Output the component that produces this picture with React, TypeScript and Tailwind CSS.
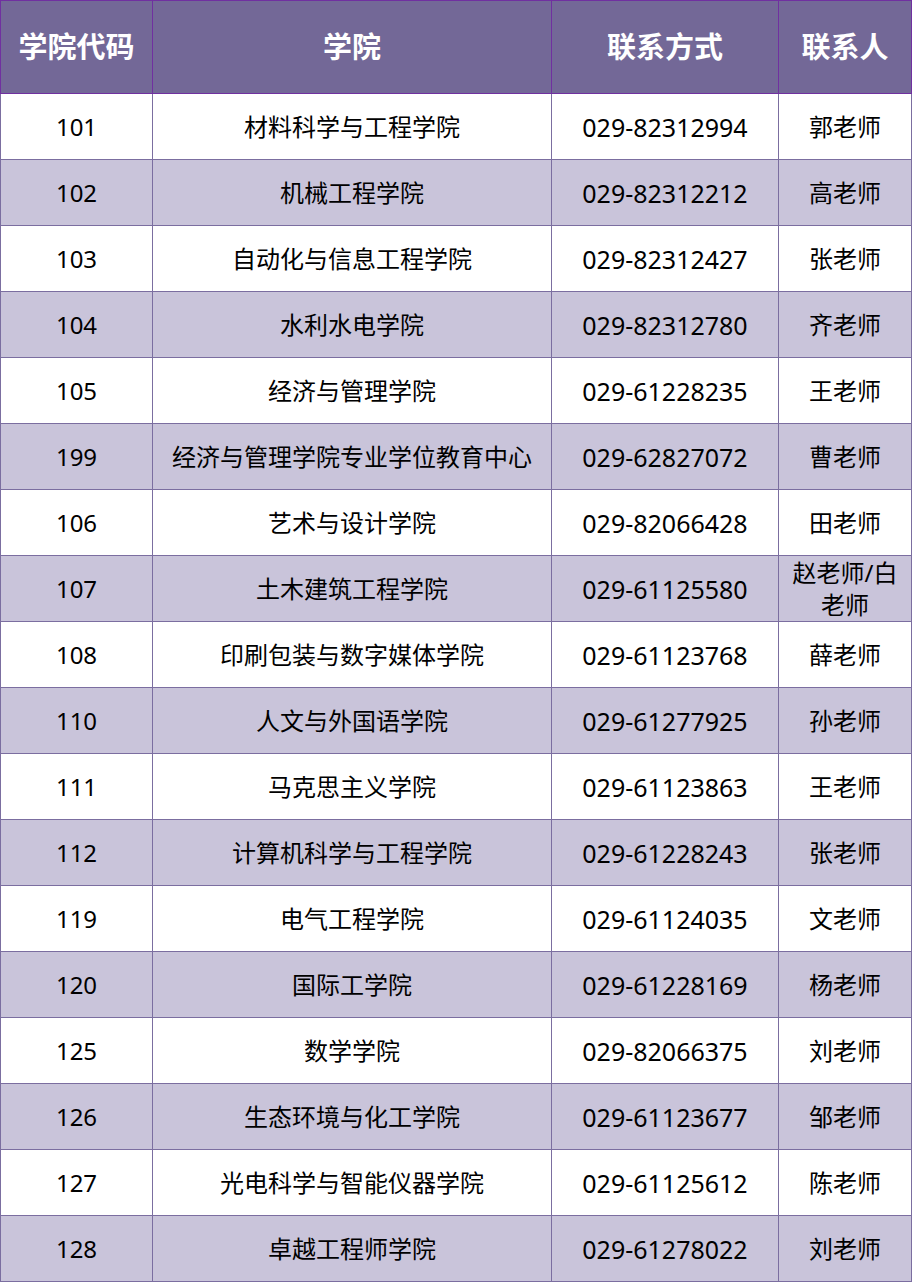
import React from "react";

const rows: [string, string, string, string][] = [
  ["101", "材料科学与工程学院", "029-82312994", "郭老师"],
  ["102", "机械工程学院", "029-82312212", "高老师"],
  ["103", "自动化与信息工程学院", "029-82312427", "张老师"],
  ["104", "水利水电学院", "029-82312780", "齐老师"],
  ["105", "经济与管理学院", "029-61228235", "王老师"],
  ["199", "经济与管理学院专业学位教育中心", "029-62827072", "曹老师"],
  ["106", "艺术与设计学院", "029-82066428", "田老师"],
  ["107", "土木建筑工程学院", "029-61125580", "赵老师/白老师"],
  ["108", "印刷包装与数字媒体学院", "029-61123768", "薛老师"],
  ["110", "人文与外国语学院", "029-61277925", "孙老师"],
  ["111", "马克思主义学院", "029-61123863", "王老师"],
  ["112", "计算机科学与工程学院", "029-61228243", "张老师"],
  ["119", "电气工程学院", "029-61124035", "文老师"],
  ["120", "国际工学院", "029-61228169", "杨老师"],
  ["125", "数学学院", "029-82066375", "刘老师"],
  ["126", "生态环境与化工学院", "029-61123677", "邹老师"],
  ["127", "光电科学与智能仪器学院", "029-61125612", "陈老师"],
  ["128", "卓越工程师学院", "029-61278022", "刘老师"],
];

const widths = ["w-[152px]", "w-[399px]", "w-[227px]", "w-[133px]"];
const headers = ["学院代码", "学院", "联系方式", "联系人"];

export default function App() {
  return (
    <div
      className="w-[912px] bg-white text-black"
      style={{ fontFamily: '"Noto Sans", "Noto Sans CJK SC", sans-serif' }}
    >
      <div className="flex border-l border-t border-[#7030a0] bg-[#736897]">
        {headers.map((h, i) => (
          <div
            key={h}
            className={`${widths[i]} h-[93px] flex items-center justify-center border-r border-b border-[#7030a0] text-white font-bold text-[29px]`}
          >
            {h}
          </div>
        ))}
      </div>
      <div className="border-l border-[#7b6ea0]">
        {rows.map((r, ri) => (
          <div
            key={ri}
            className={`flex ${ri % 2 === 1 ? "bg-[#c9c4da]" : "bg-white"}`}
          >
            {r.map((c, ci) => (
              <div
                key={ci}
                className={`${widths[ci]} h-[66px] flex items-center justify-center text-center border-r border-b border-[#7b6ea0] leading-[32px] ${ci === 2 ? "text-[25px]" : "text-[24px]"} ${ci === 3 ? "px-[10px] break-all" : ""}`}
              >
                {c}
              </div>
            ))}
          </div>
        ))}
      </div>
    </div>
  );
}
